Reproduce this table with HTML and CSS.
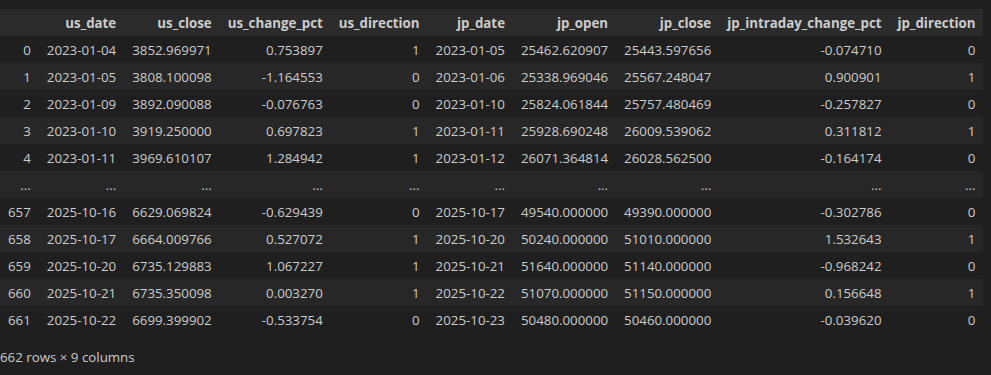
FILE: index.html
```html
<!DOCTYPE html>
<html>
<head>
<meta charset="utf-8">
<link rel="stylesheet" href="styles.css">
</head>
<body>
<div class="output">
<table class="df">
<thead>
<tr><th></th><th>us_date</th><th>us_close</th><th>us_change_pct</th><th>us_direction</th><th>jp_date</th><th>jp_open</th><th>jp_close</th><th>jp_intraday_change_pct</th><th>jp_direction</th></tr>
</thead>
<tbody>
<tr><th>0</th><td>2023-01-04</td><td>3852.969971</td><td>0.753897</td><td>1</td><td>2023-01-05</td><td>25462.620907</td><td>25443.597656</td><td>-0.074710</td><td>0</td></tr>
<tr><th>1</th><td>2023-01-05</td><td>3808.100098</td><td>-1.164553</td><td>0</td><td>2023-01-06</td><td>25338.969046</td><td>25567.248047</td><td>0.900901</td><td>1</td></tr>
<tr><th>2</th><td>2023-01-09</td><td>3892.090088</td><td>-0.076763</td><td>0</td><td>2023-01-10</td><td>25824.061844</td><td>25757.480469</td><td>-0.257827</td><td>0</td></tr>
<tr><th>3</th><td>2023-01-10</td><td>3919.250000</td><td>0.697823</td><td>1</td><td>2023-01-11</td><td>25928.690248</td><td>26009.539062</td><td>0.311812</td><td>1</td></tr>
<tr><th>4</th><td>2023-01-11</td><td>3969.610107</td><td>1.284942</td><td>1</td><td>2023-01-12</td><td>26071.364814</td><td>26028.562500</td><td>-0.164174</td><td>0</td></tr>
<tr><th>...</th><td>...</td><td>...</td><td>...</td><td>...</td><td>...</td><td>...</td><td>...</td><td>...</td><td>...</td></tr>
<tr><th>657</th><td>2025-10-16</td><td>6629.069824</td><td>-0.629439</td><td>0</td><td>2025-10-17</td><td>49540.000000</td><td>49390.000000</td><td>-0.302786</td><td>0</td></tr>
<tr><th>658</th><td>2025-10-17</td><td>6664.009766</td><td>0.527072</td><td>1</td><td>2025-10-20</td><td>50240.000000</td><td>51010.000000</td><td>1.532643</td><td>1</td></tr>
<tr><th>659</th><td>2025-10-20</td><td>6735.129883</td><td>1.067227</td><td>1</td><td>2025-10-21</td><td>51640.000000</td><td>51140.000000</td><td>-0.968242</td><td>0</td></tr>
<tr><th>660</th><td>2025-10-21</td><td>6735.350098</td><td>0.003270</td><td>1</td><td>2025-10-22</td><td>51070.000000</td><td>51150.000000</td><td>0.156648</td><td>1</td></tr>
<tr><th>661</th><td>2025-10-22</td><td>6699.399902</td><td>-0.533754</td><td>0</td><td>2025-10-23</td><td>50480.000000</td><td>50460.000000</td><td>-0.039620</td><td>0</td></tr>
</tbody>
</table>
<p class="shape">662 rows × 9 columns</p>
</div>
</body>
</html>
```
FILE: styles.css
```css
html, body {
  margin: 0;
  background: #1f1f1f;
}
.output {
  padding-top: 9px;
  font-family: "Open Sans", "Noto Sans", sans-serif;
  font-size: 13.3px;
  color: #cccccc;
}
.df {
  border-collapse: collapse;
  border-spacing: 0;
}
.df th, .df td {
  height: 27px;
  padding: 0 8px;
  text-align: right;
  white-space: nowrap;
  line-height: 18px;
  vertical-align: middle;
}
.df tbody th {
  font-weight: normal;
}
.df thead th {
  font-weight: bold;
  background: #2b2b2b;
}
.df tbody tr:nth-child(even) {
  background: #272727;
}
.shape {
  margin: 15px 0 0 0;
  line-height: 18px;
}
```
